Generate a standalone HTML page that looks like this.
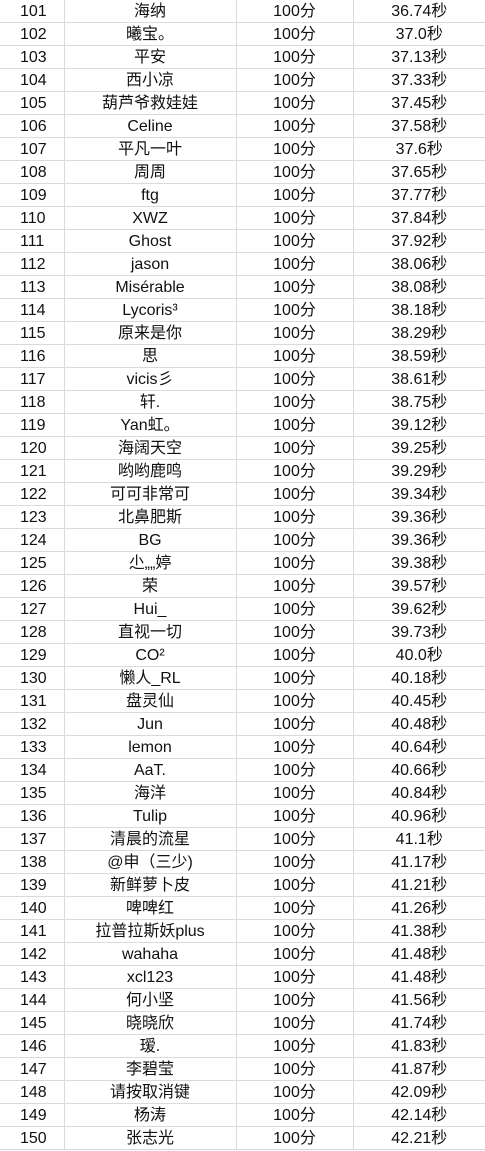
<!DOCTYPE html>
<html><head><meta charset="utf-8"><style>
body{margin:0;background:#fff;width:485px;height:1151px;overflow:hidden}
table{border-collapse:collapse;table-layout:fixed;width:485px;position:absolute;top:0;left:0}
td{height:20px;padding:2px 0 0 0;border-bottom:1px solid #dadada;border-right:1px solid #dadada;text-align:center;font:16px "Liberation Sans","Noto Sans CJK SC",sans-serif;color:#111;line-height:20px;white-space:nowrap;overflow:hidden}
td:first-child{text-align:left;padding-left:20px}
td:last-child{border-right:none}
</style></head><body>
<table>
<colgroup><col style="width:64px"><col style="width:172px"><col style="width:117px"><col style="width:132px"></colgroup>
<tbody>
<tr><td>101</td><td>海纳</td><td>100分</td><td>36.74秒</td></tr>
<tr><td>102</td><td>曦宝。</td><td>100分</td><td>37.0秒</td></tr>
<tr><td>103</td><td>平安</td><td>100分</td><td>37.13秒</td></tr>
<tr><td>104</td><td>西小凉</td><td>100分</td><td>37.33秒</td></tr>
<tr><td>105</td><td>葫芦爷救娃娃</td><td>100分</td><td>37.45秒</td></tr>
<tr><td>106</td><td>Celine</td><td>100分</td><td>37.58秒</td></tr>
<tr><td>107</td><td>平凡一叶</td><td>100分</td><td>37.6秒</td></tr>
<tr><td>108</td><td>周周</td><td>100分</td><td>37.65秒</td></tr>
<tr><td>109</td><td>ftg</td><td>100分</td><td>37.77秒</td></tr>
<tr><td>110</td><td>XWZ</td><td>100分</td><td>37.84秒</td></tr>
<tr><td>111</td><td>Ghost</td><td>100分</td><td>37.92秒</td></tr>
<tr><td>112</td><td>jason</td><td>100分</td><td>38.06秒</td></tr>
<tr><td>113</td><td>Misérable</td><td>100分</td><td>38.08秒</td></tr>
<tr><td>114</td><td>Lycoris³</td><td>100分</td><td>38.18秒</td></tr>
<tr><td>115</td><td>原来是你</td><td>100分</td><td>38.29秒</td></tr>
<tr><td>116</td><td>思</td><td>100分</td><td>38.59秒</td></tr>
<tr><td>117</td><td>vicis彡</td><td>100分</td><td>38.61秒</td></tr>
<tr><td>118</td><td>轩.</td><td>100分</td><td>38.75秒</td></tr>
<tr><td>119</td><td>Yan虹。</td><td>100分</td><td>39.12秒</td></tr>
<tr><td>120</td><td>海阔天空</td><td>100分</td><td>39.25秒</td></tr>
<tr><td>121</td><td>哟哟鹿鸣</td><td>100分</td><td>39.29秒</td></tr>
<tr><td>122</td><td>可可非常可</td><td>100分</td><td>39.34秒</td></tr>
<tr><td>123</td><td>北鼻肥斯</td><td>100分</td><td>39.36秒</td></tr>
<tr><td>124</td><td>BG</td><td>100分</td><td>39.36秒</td></tr>
<tr><td>125</td><td>尐„„婷</td><td>100分</td><td>39.38秒</td></tr>
<tr><td>126</td><td>荣</td><td>100分</td><td>39.57秒</td></tr>
<tr><td>127</td><td>Hui_</td><td>100分</td><td>39.62秒</td></tr>
<tr><td>128</td><td>直视一切</td><td>100分</td><td>39.73秒</td></tr>
<tr><td>129</td><td>CO²</td><td>100分</td><td>40.0秒</td></tr>
<tr><td>130</td><td>懒人_RL</td><td>100分</td><td>40.18秒</td></tr>
<tr><td>131</td><td>盘灵仙</td><td>100分</td><td>40.45秒</td></tr>
<tr><td>132</td><td>Jun</td><td>100分</td><td>40.48秒</td></tr>
<tr><td>133</td><td>lemon</td><td>100分</td><td>40.64秒</td></tr>
<tr><td>134</td><td>AaT.</td><td>100分</td><td>40.66秒</td></tr>
<tr><td>135</td><td>海洋</td><td>100分</td><td>40.84秒</td></tr>
<tr><td>136</td><td>Tulip</td><td>100分</td><td>40.96秒</td></tr>
<tr><td>137</td><td>清晨的流星</td><td>100分</td><td>41.1秒</td></tr>
<tr><td>138</td><td>@申（三少)</td><td>100分</td><td>41.17秒</td></tr>
<tr><td>139</td><td>新鲜萝卜皮</td><td>100分</td><td>41.21秒</td></tr>
<tr><td>140</td><td>啤啤红</td><td>100分</td><td>41.26秒</td></tr>
<tr><td>141</td><td>拉普拉斯妖plus</td><td>100分</td><td>41.38秒</td></tr>
<tr><td>142</td><td>wahaha</td><td>100分</td><td>41.48秒</td></tr>
<tr><td>143</td><td>xcl123</td><td>100分</td><td>41.48秒</td></tr>
<tr><td>144</td><td>何小坚</td><td>100分</td><td>41.56秒</td></tr>
<tr><td>145</td><td>晓晓欣</td><td>100分</td><td>41.74秒</td></tr>
<tr><td>146</td><td>瑷.</td><td>100分</td><td>41.83秒</td></tr>
<tr><td>147</td><td>李碧莹</td><td>100分</td><td>41.87秒</td></tr>
<tr><td>148</td><td>请按取消键</td><td>100分</td><td>42.09秒</td></tr>
<tr><td>149</td><td>杨涛</td><td>100分</td><td>42.14秒</td></tr>
<tr><td>150</td><td>张志光</td><td>100分</td><td>42.21秒</td></tr>
</tbody></table>
</body></html>
